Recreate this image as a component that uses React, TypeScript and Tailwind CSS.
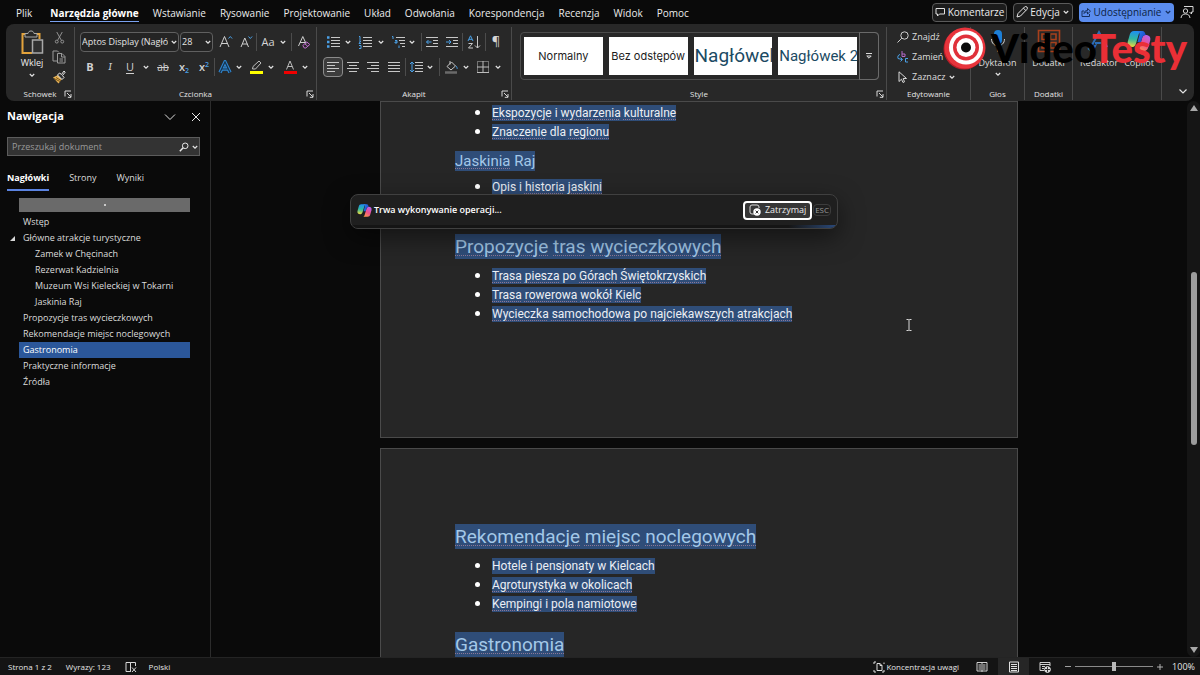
import { useState } from 'react';
import type { ReactNode } from 'react';

const TABS = [
  'Plik', 'Narzędzia główne', 'Wstawianie', 'Rysowanie', 'Projektowanie', 'Układ',
  'Odwołania', 'Korespondencja', 'Recenzja', 'Widok', 'Pomoc',
];

const HEADINGS = [
  { text: 'Wstęp', level: 1 },
  { text: 'Główne atrakcje turystyczne', level: 1, open: true },
  { text: 'Zamek w Chęcinach', level: 2 },
  { text: 'Rezerwat Kadzielnia', level: 2 },
  { text: 'Muzeum Wsi Kieleckiej w Tokarni', level: 2 },
  { text: 'Jaskinia Raj', level: 2 },
  { text: 'Propozycje tras wycieczkowych', level: 1 },
  { text: 'Rekomendacje miejsc noclegowych', level: 1 },
  { text: 'Gastronomia', level: 1 },
  { text: 'Praktyczne informacje', level: 1 },
  { text: 'Źródła', level: 1 },
];

function Chevron({ className = 'w-2 shrink-0' }: { className?: string }) {
  return (
    <svg viewBox="0 0 8 8" className={className} fill="none" stroke="#e4e4e4" strokeWidth="1.2">
      <path d="M1.8 3 4 5.2 6.2 3" />
    </svg>
  );
}

function Sep() {
  return <span className="h-[18px] w-px shrink-0 bg-[#4c4c4c]" />;
}

function Tool({ label, className, children }: { label: string; className: string; children: ReactNode }) {
  return (
    <button type="button" aria-label={label} className={`flex h-5 shrink-0 items-center justify-center ${className}`}>
      {children}
    </button>
  );
}

function Group({ name, launcher, className, children }: { name: string; launcher?: boolean; className: string; children: ReactNode }) {
  return (
    <section className={`relative mt-[3px] mb-px flex flex-col border-r border-[#4a4a4a] ${className}`}>
      <div className="min-h-0 flex-1">{children}</div>
      <div className="h-3 text-center text-[8px] leading-3 text-[#e4e4e4]">{name}</div>
      {launcher && (
        <button type="button" aria-label={`${name} - więcej opcji`} className="absolute right-[2px] bottom-[2px]">
          <svg viewBox="0 0 8 8" className="h-2 w-2" fill="none" stroke="#d8d8d8">
            <path d="M1 6.5V1H7M3 3l4 4M7 4v3.3H3.8" />
          </svg>
        </button>
      )}
    </section>
  );
}

/* Lines of a paragraph icon, one [x1, x2] pair per row */
function Lines({ rows, children }: { rows: number[][]; children?: ReactNode }) {
  return (
    <svg viewBox="0 0 14 14" className="h-[14px] w-[14px]" fill="none" stroke="#c8c8c8">
      {rows.map(([a, b], i) => (
        <path key={i} d={`M${a} ${2.5 + i * 3}H${b}`} />
      ))}
      {children}
    </svg>
  );
}

function CopilotLogo({ id, className }: { id: string; className: string }) {
  return (
    <svg viewBox="0 0 24 24" className={className}>
      <defs>
        <linearGradient id={`${id}a`} x1="0.4" y1="0" x2="0.3" y2="1">
          <stop offset="0" stopColor="#1e8ff2" />
          <stop offset="0.5" stopColor="#30b8a0" />
          <stop offset="1" stopColor="#f2dc3c" />
        </linearGradient>
        <linearGradient id={`${id}b`} x1="0.8" y1="0" x2="0.2" y2="1">
          <stop offset="0" stopColor="#b565f0" />
          <stop offset="0.5" stopColor="#ee4f8e" />
          <stop offset="1" stopColor="#ff9a45" />
        </linearGradient>
        <linearGradient id={`${id}c`} x1="0" y1="0" x2="1" y2="0.6">
          <stop offset="0" stopColor="#2f8df5" />
          <stop offset="1" stopColor="#1a45c8" />
        </linearGradient>
      </defs>
      <path d="M7 2h8c-2 0-2.700 1.200-3.200 3L9 14.500C8.400 16.500 7.400 18 5.500 18 1.500 18 0 15.500 0.800 12.600L2.800 5.500C3.500 3.200 4.600 2 7 2Z" fill={`url(#${id}a)`} />
      <path d="M17 22H9c2 0 2.700-1.200 3.200-3L15 9.500C15.600 7.500 16.600 6 18.500 6 22.500 6 24 8.500 23.200 11.400L21.200 18.500C20.500 20.800 19.400 22 17 22Z" fill={`url(#${id}b)`} />
      <path d="M9 2h6.500c1.500 0 2.200 1 2.700 2.400L18.800 6c-2.200 0-3.200 1.500-3.800 3.500L14 13h-3.500l2-7C12.900 4 11.500 2 9 2Z" fill={`url(#${id}c)`} />
    </svg>
  );
}

function TitleBar() {
  return (
    <header className="flex h-6 shrink-0 items-center justify-between pr-[6px] pl-4">
      <nav className="flex gap-[14px] text-[10px] leading-[16px] text-[#ececec]">
        {TABS.map((tab) => (
          <a
            key={tab}
            href="#"
            className={`border-b pt-[2px] whitespace-nowrap ${
              tab === 'Narzędzia główne' ? 'ml-1 border-[#7aa2f0] font-bold text-white' : 'border-transparent'
            }`}
          >
            {tab}
          </a>
        ))}
      </nav>
      <div className="flex items-center gap-[6px] text-[10px] whitespace-nowrap">
        <button type="button" className="flex h-[19px] w-[75px] items-center justify-center gap-[3px] rounded border border-[#5a5a5a] bg-[#1c1c1c] text-[#ececec]">
          <svg viewBox="0 0 10 10" className="h-[10px] w-[10px] shrink-0" fill="none" stroke="#e0e0e0">
            <path d="M1 1.500h8.500v5.500H4.500L2.500 9V7H1Z" />
          </svg>
          Komentarze
        </button>
        <button type="button" className="flex h-[19px] w-[60px] items-center justify-center gap-[2px] rounded border border-[#5a5a5a] bg-[#1c1c1c] text-[#ececec]">
          <svg viewBox="0 0 12 12" className="h-3 w-3 shrink-0" fill="none" stroke="#e8e8e8">
            <path d="M1 11 2 7.500 8.500 1a1.500 1.500 0 0 1 2.400 2.400L4.500 10ZM7.500 2.200l2.300 2.300" />
          </svg>
          Edycja
          <Chevron />
        </button>
        <button type="button" className="flex h-[19px] w-[95px] items-center justify-center gap-[3px] rounded bg-[#5b8def] text-[#0d1f42]">
          <svg viewBox="0 0 10 10" className="h-[10px] w-[10px] shrink-0" fill="none" stroke="#16305f">
            <path d="M3 4H1v5.500h7.500V7M3 6.500c.3-2.200 1.500-3 3.500-3V1.500l3 2.700-3 2.800V5C5 5 4 5.300 3 6.500Z" />
          </svg>
          Udostępnianie
          <svg viewBox="0 0 8 8" className="w-2 shrink-0" fill="none" stroke="#16305f" strokeWidth="1.2">
            <path d="M1.800 3 4 5.200 6.200 3" />
          </svg>
        </button>
        <button type="button" aria-label="Opinia">
          <svg viewBox="0 0 14 14" className="h-[14px] w-[14px]" fill="none" stroke="#d8d8d8">
            <path d="M4 1.500h9v5.500h-1.500V9L9.500 7" />
            <circle cx="5.500" cy="6" r="2.200" />
            <path d="M1 13c.4-3 2-4 4.500-4s4 1 4.500 4" />
          </svg>
        </button>
      </div>
    </header>
  );
}

function ClipboardGroup() {
  return (
    <Group name="Schowek" launcher className="w-[69px]">
      <div className="flex h-full pl-3">
        <button type="button" className="flex w-[28px] flex-col items-center pt-[3px] text-[9px] leading-3 text-[#ececec]">
          <svg viewBox="0 0 24 26" className="h-[26px] w-6" fill="none">
            <path d="M5 4H2.500v19H12M17 4h2.500v5" stroke="#e3a33c" strokeWidth="2" />
            <path d="M5 3.500h3C8.500 1.500 9.500 1 11 1s2.500.5 3 2.500h3V7H5Z" stroke="#a8a8a8" />
            <path d="M12.500 10h10v13h-10Z" fill="#303030" stroke="#a8a8a8" strokeWidth="1.500" />
          </svg>
          <span className="mt-px">Wklej</span>
          <Chevron className="mt-[2px] w-2" />
        </button>
        <div className="flex flex-1 flex-col items-center pr-[2px]">
          <Tool label="Wytnij" className="w-4">
            <svg viewBox="0 0 12 14" className="h-[13px] w-[11px]" fill="none" stroke="#9a9a9a">
              <path d="M3 1l5 9M9 1l-5 9" />
              <circle cx="3" cy="11.500" r="1.600" />
              <circle cx="9" cy="11.500" r="1.600" />
            </svg>
          </Tool>
          <Tool label="Kopiuj" className="w-4">
            <svg viewBox="0 0 14 14" className="h-[14px] w-[14px]" fill="none" stroke="#9a9a9a">
              <path d="M5 11H1V1h4.500L7 2.500M5.500 3.500H10L13 6.500V13H5.500ZM9.500 3.500V7H13M7.500 9h3.500M7.500 11h3.500" />
            </svg>
          </Tool>
          <Tool label="Malarz formatów" className="w-4">
            <svg viewBox="0 0 14 14" className="h-[14px] w-[14px]">
              <path d="M1 7.500 6 5l4 4-3.500 4.500Z" fill="#e8b458" />
              <path d="M2 8.500l6 3M4 7.500l5 3" stroke="#7a5415" />
              <path d="m5.500 5 2-2 2 1.500L12 1l1.200 1.200L10.500 5.500 12 7.500l-2 2Z" fill="#303030" stroke="#e6e6e6" />
            </svg>
          </Tool>
        </div>
      </div>
    </Group>
  );
}

function FontGroup() {
  return (
    <Group name="Czcionka" launcher className="w-[242px]">
      <div className="flex h-[30px] items-center pl-[5px] text-[#d6d6d6]">
        <div className="relative">
          <select aria-label="Czcionka" className="block h-5 w-[99px] appearance-none rounded border border-[#606060] bg-[#242424] pr-[10px] pl-px text-[9px] text-[#e4e4e4]">
            <option>Aptos Display (Nagłówki)</option>
          </select>
          <Chevron className="pointer-events-none absolute top-[6px] right-[1px] w-2" />
        </div>
        <div className="relative ml-px">
          <select aria-label="Rozmiar czcionki" className="block h-5 w-[33px] appearance-none rounded border border-[#606060] bg-[#242424] pl-px text-[9px] text-[#e4e4e4]">
            <option>28</option>
          </select>
          <Chevron className="pointer-events-none absolute top-[6px] right-[1px] w-2" />
        </div>
        <Tool label="Zwiększ rozmiar" className="ml-[3px] w-5">
          <svg viewBox="0 0 14 14" className="h-[14px] w-[14px]" fill="none" stroke="#d0d0d0">
            <path d="M1 12 5.500 1.500 10 12M2.800 8.500h5.500" />
            <path d="m9.500 3.500 1.800-2 1.800 2" stroke="#4aa0e6" />
          </svg>
        </Tool>
        <Tool label="Zmniejsz rozmiar" className="w-5">
          <svg viewBox="0 0 14 14" className="h-[14px] w-[14px]" fill="none" stroke="#d0d0d0">
            <path d="M2 12 5.800 3 9.500 12M3.300 9h5" />
            <path d="m9.500 1.500 1.800 2 1.800-2" stroke="#4aa0e6" />
          </svg>
        </Tool>
        <Sep />
        <Tool label="Zmień wielkość liter" className="w-[34px] gap-1 text-[11px]">
          Aa
          <Chevron />
        </Tool>
        <Sep />
        <Tool label="Wyczyść formatowanie" className="w-6">
          <svg viewBox="0 0 14 14" className="h-[14px] w-[14px]" fill="none" stroke="#d0d0d0">
            <path d="M1.500 11 5.800 1.500 9 8.500M3 7.500h5" />
            <path d="m5.800 10.500 4-3.500 3 2.500-4 3.500h-1.500ZM7.800 8.800l3 2.500" stroke="#c06ad0" />
          </svg>
        </Tool>
      </div>
      <div className="flex h-5 items-center pl-[5px] text-[11px] text-[#d0d0d0]">
        <Tool label="Pogrubienie" className="w-5 font-bold">B</Tool>
        <Tool label="Kursywa" className="w-5 font-serif italic">I</Tool>
        <Tool label="Podkreślenie" className="w-5 underline underline-offset-2">U</Tool>
        <Chevron className="mx-[2px] w-2 shrink-0" />
        <Tool label="Przekreślenie" className="w-[22px] text-[10px] line-through">ab</Tool>
        <Tool label="Indeks dolny" className="w-5 font-semibold">
          <span>x<sub className="text-[7px] text-[#4aa0e6]">2</sub></span>
        </Tool>
        <Tool label="Indeks górny" className="w-5 font-semibold">
          <span>x<sup className="text-[7px] text-[#4aa0e6]">2</sup></span>
        </Tool>
        <Sep />
        <Tool label="Efekty tekstowe" className="w-5">
          <svg viewBox="0 0 14 14" className="h-[14px] w-[14px]" fill="none">
            <path d="M2 12.500 7 2l5 10.500M4 9h6" stroke="#2f86d0" strokeWidth="3.400" />
            <path d="M2 12.500 7 2l5 10.500M4 9h6" stroke="#16324c" strokeWidth="1.200" />
          </svg>
        </Tool>
        <Chevron />
        <Tool label="Kolor wyróżnienia" className="ml-[2px] w-[22px]">
          <svg viewBox="0 0 14 14" className="h-[14px] w-[14px]" fill="none" stroke="#bdbdbd">
            <path d="m4 6.500 6-5.500 2 2-5.500 6H3.500Z" />
            <path d="M1 12.500h13" stroke="#ffff00" strokeWidth="3" />
          </svg>
        </Tool>
        <Chevron />
        <Tool label="Kolor czcionki" className="ml-[4px] w-[22px]">
          <svg viewBox="0 0 14 14" className="h-[14px] w-[14px]" fill="none" stroke="#bdbdbd">
            <path d="M3.500 9.500 7 1l3.500 8.500M4.800 6.500h4.400" />
            <path d="M1 12.500h13" stroke="#f00000" strokeWidth="3" />
          </svg>
        </Tool>
        <Chevron />
      </div>
    </Group>
  );
}

function ParagraphGroup() {
  return (
    <Group name="Akapit" launcher className="w-[195px]">
      <div className="flex h-[30px] items-center pl-[6px] text-[#d6d6d6]">
        <Tool label="Punktory" className="w-5">
          <Lines rows={[[5, 14], [5, 14], [5, 14], [5, 14]]}>
            <path d="M1 2.500h2.500M1 7h2.500M1 11.500h2.500" stroke="#4aa0e6" strokeWidth="2.400" />
          </Lines>
        </Tool>
        <Chevron className="mr-[5px] ml-[1px] w-2 shrink-0" />
        <Tool label="Numerowanie" className="w-4">
          <Lines rows={[[5, 14], [5, 14], [5, 14], [5, 14]]}>
            <path d="M1 1.500h1V5M1 6h1.800L1 8.500h2M1 10.500h2v3H1" stroke="#4aa0e6" />
          </Lines>
        </Tool>
        <Chevron className="mr-[5px] ml-1 w-2 shrink-0" />
        <Tool label="Lista wielopoziomowa" className="w-4">
          <Lines rows={[[5, 14], [8, 14], [9, 14], [11, 14]]}>
            <path d="M1 1.500h1V4M4 5.500h2V8H4V7h2M8 10.500V13" stroke="#4aa0e6" />
          </Lines>
        </Tool>
        <Chevron className="mr-[5px] ml-[2px] w-2 shrink-0" />
        <Sep />
        <Tool label="Zmniejsz wcięcie" className="w-5">
          <Lines rows={[[1, 13], [8, 13], [8, 13], [1, 13]]}>
            <path d="M6.500 7H1.500M3.500 5l-2 2 2 2" stroke="#4aa0e6" />
          </Lines>
        </Tool>
        <Tool label="Zwiększ wcięcie" className="w-5">
          <Lines rows={[[1, 13], [8, 13], [8, 13], [1, 13]]}>
            <path d="M1 7h5M4 5l2 2-2 2" stroke="#4aa0e6" />
          </Lines>
        </Tool>
        <Sep />
        <Tool label="Sortuj" className="w-[22px]">
          <svg viewBox="0 0 14 14" className="h-[14px] w-[14px]" fill="none" stroke="#c8c8c8">
            <path d="M1 6 3.500.8 6 6M2 4.300h3" stroke="#4aa0e6" />
            <path d="M1.500 8.500h4L1.500 13h4.500M10.500 1v12M8 10.500l2.500 2.500 2.500-2.500" />
          </svg>
        </Tool>
        <Sep />
        <Tool label="Pokaż wszystko" className="w-5 text-[13px]">¶</Tool>
      </div>
      <div className="flex h-5 items-center pl-[6px]">
        <Tool label="Wyrównaj do lewej" className="w-5 rounded border border-[#8a8a8a] bg-[#3c3c3c]">
          <Lines rows={[[1, 13], [1, 9], [1, 13], [1, 9]]} />
        </Tool>
        <Tool label="Wyśrodkuj" className="w-5">
          <Lines rows={[[1, 13], [3, 11], [1, 13], [3, 11]]} />
        </Tool>
        <Tool label="Wyrównaj do prawej" className="w-5">
          <Lines rows={[[1, 13], [5, 13], [1, 13], [5, 13]]} />
        </Tool>
        <Tool label="Wyjustuj" className="w-[22px]">
          <Lines rows={[[1, 13], [1, 13], [1, 13], [1, 13]]} />
        </Tool>
        <Sep />
        <Tool label="Interlinia" className="w-5">
          <Lines rows={[[6, 14], [6, 14], [6, 14], [6, 14]]}>
            <path d="M3 2v10M1 4l2-2 2 2M1 10l2 2 2-2" stroke="#4aa0e6" />
          </Lines>
        </Tool>
        <Chevron className="mr-[5px] w-2 shrink-0" />
        <Sep />
        <Tool label="Cieniowanie" className="w-[22px]">
          <svg viewBox="0 0 14 14" className="h-[14px] w-[14px]" fill="none" stroke="#c8c8c8">
            <path d="M3 6.500 7.500 2l4 4-4.500 4ZM6 1v3.500" />
            <path d="M12 6c1 1.500 1.500 2 1 3" stroke="#4aa0e6" />
            <path d="M1 12.500h12" stroke="#6a6a6a" strokeWidth="2.500" />
          </svg>
        </Tool>
        <Chevron className="mr-[2px] w-2 shrink-0" />
        <Tool label="Obramowania" className="w-[22px]">
          <svg viewBox="0 0 14 14" className="h-[14px] w-[14px]" fill="none" stroke="#bdbdbd">
            <path d="M1.500 1.500h11v11h-11Z" strokeDasharray="1 1" />
            <path d="M7 1v12M1 7h12M1 12.500h12" />
          </svg>
        </Tool>
        <Chevron />
      </div>
    </Group>
  );
}

function StylesGroup() {
  return (
    <Group name="Style" launcher className="min-w-0 flex-1">
      <div className="mt-[5px] mr-[7px] ml-2 flex h-12 rounded border border-[#4c4c4c]">
        <div className="grid flex-1 grid-cols-4 gap-[6px] py-1 pr-[2px] pl-[3px] font-['Inter',sans-serif] whitespace-nowrap">
          <button type="button" className="overflow-hidden bg-white text-[11px] text-[#1c1c1c]">Normalny</button>
          <button type="button" className="overflow-hidden bg-white text-[11px] text-[#1c1c1c]">Bez odstępów</button>
          <button type="button" className="overflow-hidden bg-white pl-px text-left font-['Roboto',sans-serif] text-[19px] text-[#1b4a63]">Nagłówek 1</button>
          <button type="button" className="overflow-hidden bg-white pl-px text-left font-['Roboto',sans-serif] text-[15px] text-[#1b4a63]">Nagłówek 2</button>
        </div>
        <button type="button" aria-label="Więcej stylów" className="-my-px -mr-px flex w-5 items-center justify-center rounded-r border border-[#6a6a6a]">
          <svg viewBox="0 0 8 8" className="h-2 w-2" fill="none" stroke="#dadada">
            <path d="M1 1.500h6M1.800 4 4 6.200 6.200 4Z" />
          </svg>
        </button>
      </div>
    </Group>
  );
}

function EditingGroups() {
  return (
    <>
      <Group name="Edytowanie" className="w-[84px]">
        <div className="flex flex-col pl-[10px] text-[9px] text-[#dedede]">
          <button type="button" className="flex h-5 items-center gap-[3px]">
            <svg viewBox="0 0 12 12" className="h-3 w-3" fill="none" stroke="#d0d0d0">
              <circle cx="7.500" cy="4.500" r="3.700" />
              <path d="M4.800 7.200.5 11.500" />
            </svg>
            Znajdź
          </button>
          <button type="button" className="flex h-5 items-center gap-[3px]">
            <svg viewBox="0 0 12 12" className="h-3 w-3" fill="none">
              <path d="M5 0v5.500h3V3H5" stroke="#b56ac8" />
              <path d="M3 3.500C1 4 .5 5.500 1 7.500L5 8.500M3.500 6.500l2 2-2 2M11 7.500H8.500v3.500H11" stroke="#4aa0e6" />
            </svg>
            Zamień
          </button>
          <button type="button" className="flex h-5 items-center gap-[3px]">
            <svg viewBox="0 0 12 12" className="h-3 w-3" fill="none" stroke="#d8d8d8">
              <path d="M2 .8v9.700l2.500-2.300L6 11.500l1.500-.7L6.200 7.500H9.500Z" />
            </svg>
            Zaznacz
            <Chevron />
          </button>
        </div>
      </Group>
      <Group name="Głos" className="w-[54px]">
        <button type="button" className="flex w-full flex-col items-center pt-[2px] text-[9px] leading-[14px] text-[#dedede]">
          <svg viewBox="0 0 16 24" className="h-6 w-4" fill="none">
            <rect x="4" y="1" width="8" height="14" rx="4" fill="#1d7fd6" />
            <path d="M1.500 10c0 9 13 9 13 0M8 17v6" stroke="#d0d0d0" />
          </svg>
          <span className="mt-[3px]">Dyktafon</span>
          <Chevron />
        </button>
      </Group>
      <Group name="Dodatki" className="w-12">
        <button type="button" className="flex w-full flex-col items-center pt-[2px] text-[9px] leading-[14px] text-[#dedede]">
          <svg viewBox="0 0 24 24" className="h-6 w-6" fill="none" stroke="#a8401c" strokeWidth="1.600">
            <path d="M1.500 1.500h21v21h-21ZM5 5h5.500v5.500H5ZM13.500 5H19v5.500h-5.500ZM5 13.500h5.500V19H5ZM13.500 13.500H19V19h-5.500Z" />
          </svg>
          <span className="mt-[3px]">Dodatki</span>
        </button>
      </Group>
      <Group name="" className="w-[89px]">
        <div className="flex justify-center gap-[6px] pt-[2px] text-[9px] leading-[14px] text-[#dedede]">
          <button type="button" className="flex flex-col items-center">
            <svg viewBox="0 0 24 24" className="h-6 w-6" fill="none" stroke="#2b6cb8" strokeWidth="2">
              <path d="M4 18 12 3l8 15M8 14h9M2 20l6-3-3 6Z" />
            </svg>
            <span className="mt-[3px]">Redaktor</span>
          </button>
          <button type="button" className="flex flex-col items-center">
            <CopilotLogo id="ribbon" className="h-6 w-6" />
            <span className="mt-[3px]">Copilot</span>
          </button>
        </div>
      </Group>
    </>
  );
}

function ChannelLogo() {
  return (
    <div className="pointer-events-none absolute top-[26px] right-[13px] z-20 flex w-[244px] items-center justify-between font-['Lato',sans-serif] text-[40px] leading-[44px] font-black">
      <svg viewBox="0 0 44 44" className="h-11 w-11">
        <circle cx="21" cy="23" r="20.500" fill="#b81d28" />
        <circle cx="22" cy="22" r="20.500" fill="#e8343c" />
        <circle cx="23" cy="21.500" r="17" fill="#fff" />
        <circle cx="23" cy="21.500" r="13" fill="#e0303a" />
        <circle cx="23" cy="21.500" r="9.500" fill="#fff" />
        <circle cx="23" cy="21.500" r="5" fill="#0a0a0a" />
      </svg>
      <span>
        <span className="text-black">Video</span>
        <span className="text-[#ea2f36]">Testy</span>
      </span>
    </div>
  );
}

function NavigationPane() {
  const [query, setQuery] = useState('');

  return (
    <aside className="flex w-[211px] shrink-0 flex-col border-r border-[#2c2c2c] text-[#dcdcdc]">
      <div className="flex h-[31px] items-center pr-[9px] pl-[7px]">
        <h2 className="flex-1 text-[11px] font-bold text-white">Nawigacja</h2>
        <button type="button" aria-label="Opcje okienka">
          <svg viewBox="0 0 12 12" className="h-3 w-3" fill="none" stroke="#e0e0e0">
            <path d="m1 3.500 5 5 5-5" />
          </svg>
        </button>
        <button type="button" aria-label="Zamknij" className="ml-[15px]">
          <svg viewBox="0 0 10 10" className="h-[10px] w-[10px]" fill="none" stroke="#e8e8e8">
            <path d="m1 1 8 8M9 1 1 9" />
          </svg>
        </button>
      </div>
      <div className="mt-[5px] mr-[10px] ml-[7px] flex h-[19px] items-center border border-[#5c5c5c] bg-[#333] pr-0 pl-1">
        <input
          value={query}
          onChange={(e) => setQuery(e.target.value)}
          aria-label="Przeszukaj dokument"
          placeholder="Przeszukaj dokument"
          className="min-w-0 flex-1 text-[9px] placeholder:text-[#9a9a9a]"
        />
        <svg viewBox="0 0 10 10" className="h-[10px] w-[10px]" fill="none" stroke="#e8e8e8">
          <circle cx="6.200" cy="3.800" r="2.800" />
          <path d="M4.200 5.800.8 9.200" strokeWidth="1.500" />
        </svg>
        <Chevron className="ml-[2px] w-2" />
      </div>
      <div role="tablist" className="mt-[13px] ml-[7px] flex gap-5 text-[9px] leading-[18px]">
        <button type="button" role="tab" aria-selected="true" className="border-b-2 border-[#5b83e0] pb-[2px] font-bold text-white">Nagłówki</button>
        <button type="button" role="tab" aria-selected="false" className="border-b-2 border-transparent pb-[2px]">Strony</button>
        <button type="button" role="tab" aria-selected="false" className="border-b-2 border-transparent pb-[2px]">Wyniki</button>
      </div>
      <div className="mt-[7px] mr-5 ml-[19px] flex h-[14px] items-center justify-center bg-[#6a6a6a]">
        <span className="h-[2px] w-[2px] bg-[#c8c8c8]" />
      </div>
      <ul className="mt-[2px] text-[9px] leading-4 whitespace-nowrap">
        {HEADINGS.map((h) => (
          <li key={h.text} className="mr-5 ml-[10px] flex items-center">
            <span className="w-[9px] shrink-0">
              {h.open && (
                <svg viewBox="0 0 5 5" className="h-[5px] w-[5px]" fill="#d8d8d8">
                  <path d="M5 0v5H0Z" />
                </svg>
              )}
            </span>
            <a
              href="#"
              className={`flex-1 ${h.level === 2 ? 'pl-4' : 'pl-1'} ${h.text === 'Gastronomia' ? 'bg-[#2b579a] text-white' : ''}`}
            >
              {h.text}
            </a>
          </li>
        ))}
      </ul>
    </aside>
  );
}

function Heading1({ children }: { children: ReactNode }) {
  return (
    <h1 className="flex text-[19px] leading-[25px] text-[#a3c8e8]">
      <span className="bg-[#2f4d78]">{children}</span>
    </h1>
  );
}

function Bullet({ children }: { children: ReactNode }) {
  return (
    <li className="flex h-[19px] items-center pl-5 text-[12px] leading-4 text-[#eceff4]">
      <span className="mr-3 h-[5px] w-[5px] rounded-full bg-white" />
      <span className="bg-[#2f4d78]">{children}</span>
    </li>
  );
}

/* Proofing mark under a misspelled word */
function Err({ children }: { children: ReactNode }) {
  return (
    <span className="underline decoration-[#8d7796] decoration-dotted decoration-1 underline-offset-2">{children}</span>
  );
}

function CopilotBar() {
  return (
    <div className="absolute top-[92px] -left-[31px] z-10 flex h-[35px] w-[488px] flex-col overflow-hidden rounded-lg border border-[#404040] bg-[#1f1f1f] font-['Open_Sans',sans-serif] shadow-[0_8px_24px_rgba(0,0,0,0.5)]">
      <div className="flex flex-1 items-center pr-[6px] pl-[6px]">
        <CopilotLogo id="bar" className="h-[15px] w-[15px]" />
        <span className="ml-[2px] flex-1 text-[9px] font-semibold text-white">Trwa wykonywanie operacji...</span>
        <button type="button" className="flex h-[19px] w-[69px] items-center justify-center gap-1 rounded border-2 border-white bg-[#363636] text-[9px] text-[#ececec]">
          <svg viewBox="0 0 12 12" className="h-3 w-3" fill="none">
            <path d="M5 10H3a2 2 0 0 1-2-2V3a2 2 0 0 1 2-2h5a2 2 0 0 1 2 2v1" stroke="#d8d8d8" />
            <circle cx="8" cy="8" r="3.700" fill="#fff" />
            <path d="m6.600 6.600 2.800 2.800M9.400 6.600 6.600 9.400" stroke="#333" />
          </svg>
          Zatrzymaj
        </button>
        <kbd className="ml-px rounded-sm border border-[#3c3c3c] px-px font-['Open_Sans',sans-serif] text-[8px] leading-[10px] text-[#9a9a9a]">ESC</kbd>
      </div>
      <div className="h-[3px] bg-linear-to-r from-[#151515] from-90% to-[#2a4a7c]" />
    </div>
  );
}

function Document() {
  return (
    <main className="relative min-w-0 flex-1 overflow-hidden font-['Roboto',sans-serif]">
      <article className="relative mx-auto h-[337px] w-[638px] border border-[#4a4a4a] bg-[#262626] pt-px pl-[74px]">
        <ul>
          <Bullet><Err>Ekspozycje</Err> i <Err>wydarzenia</Err> <Err>kulturalne</Err></Bullet>
          <Bullet><Err>Znaczenie</Err> dla <Err>regionu</Err></Bullet>
        </ul>
        <h2 className="mt-[10px] flex text-[15px] leading-5 text-[#a3c8e8]">
          <span className="bg-[#2f4d78]"><Err>Jaskinia</Err> Raj</span>
        </h2>
        <ul className="mt-[6px] mb-[38px]">
          <Bullet>Opis i <Err>historia</Err> <Err>jaskini</Err></Bullet>
        </ul>
        <Heading1><Err>Propozycje</Err> <Err>tras</Err> <Err>wycieczkowych</Err></Heading1>
        <ul className="mt-[7px]">
          <Bullet><Err>Trasa</Err> <Err>piesza</Err> po <Err>Górach</Err> <Err>Świętokrzyskich</Err></Bullet>
          <Bullet><Err>Trasa</Err> <Err>rowerowa</Err> <Err>wokół</Err> <Err>Kielc</Err></Bullet>
          <Bullet><Err>Wycieczka</Err> <Err>samochodowa</Err> po <Err>najciekawszych</Err> <Err>atrakcjach</Err></Bullet>
        </ul>
        <CopilotBar />
      </article>
      <article className="mx-auto mt-[10px] w-[638px] border border-[#4a4a4a] bg-[#262626] pt-[75px] pb-20 pl-[74px]">
        <Heading1><Err>Rekomendacje</Err> <Err>miejsc</Err> <Err>noclegowych</Err></Heading1>
        <ul className="mt-[7px] mb-[19px]">
          <Bullet>Hotele i pensjonaty w Kielcach</Bullet>
          <Bullet><Err>Agroturystyka</Err> w <Err>okolicach</Err></Bullet>
          <Bullet><Err>Kempingi</Err> i <Err>pola</Err> <Err>namiotowe</Err></Bullet>
        </ul>
        <Heading1><Err>Gastronomia</Err></Heading1>
      </article>
      {/* Text cursor */}
      <svg viewBox="0 0 8 12" className="absolute top-[218px] left-[694px] h-3 w-2" fill="none" stroke="#d8d8d8">
        <path d="M1.500.5h2l.5.5.5-.5h2M4 1v10M1.500 11.500h2l.5-.5.5.5h2" />
      </svg>
    </main>
  );
}

function Scrollbar() {
  return (
    <div className="flex w-[13px] shrink-0 flex-col items-center rounded-lg bg-[#151515] py-1">
      <svg viewBox="0 0 8 6" className="h-[6px] w-2" fill="#a8a8a8"><path d="M4 0 8 6H0Z" /></svg>
      <div className="flex min-h-0 flex-1 flex-col">
        <div className="flex-[161]" />
        <div className="w-[6px] flex-[174] rounded-full bg-[#9c9c9c]" />
        <div className="flex-[202]" />
      </div>
      <svg viewBox="0 0 8 6" className="h-[6px] w-2" fill="#a8a8a8"><path d="M4 6 0 0h8Z" /></svg>
    </div>
  );
}

function StatusBar() {
  const [zoom, setZoom] = useState(50);

  return (
    <footer className="flex h-[18px] shrink-0 items-center border-t border-[#242424] bg-[#141414] pr-[5px] pl-2 text-[8px] whitespace-nowrap text-[#e4e4e4]">
      <span>Strona 1 z 2</span>
      <span className="ml-[14px]">Wyrazy: 123</span>
      <svg viewBox="0 0 12 12" className="ml-[14px] h-3 w-3" fill="none" stroke="#d8d8d8">
        <path d="M5.500 1.500H1v9h4.500ZM5.500 1.500H10.500V5M5.500 1.500v9M7 6.500l4 4.500M11 6.500 7 11" />
      </svg>
      <span className="ml-3 flex-1">Polski</span>
      <button type="button" className="flex items-center gap-[1px]">
        <svg viewBox="0 0 12 12" className="h-3 w-3" fill="none" stroke="#e0e0e0">
          <path d="M3 1H1v2M1 9v2h2M9 11h2V9M11 3V1.500M4 2.500h3L9 4.500v5H4ZM7 2.500v2h2" />
        </svg>
        Koncentracja uwagi
      </button>
      <button type="button" aria-label="Tryb odczytu" className="ml-[17px]">
        <svg viewBox="0 0 12 12" className="h-3 w-3" fill="none" stroke="#d0d0d0">
          <path d="M1 1.500h10v8.500H1ZM6 1.500V11M2.500 4H5M2.500 6H5M2.500 8H5M7 4h2.500M7 6h2.500M7 8h2.500" />
        </svg>
      </button>
      <button type="button" aria-label="Układ wydruku" className="ml-[10px] flex h-[17px] w-[31px] items-center justify-center bg-[#262626]">
        <svg viewBox="0 0 10 12" className="h-3 w-[10px]" fill="none" stroke="#e0e0e0">
          <path d="M.5 1h9v10h-9ZM2 3.500h6M2 5.500h6M2 7.500h6M2 9.500h6" />
        </svg>
      </button>
      <button type="button" aria-label="Układ sieci Web" className="ml-[10px]">
        <svg viewBox="0 0 12 12" className="h-3 w-3" fill="none" stroke="#d0d0d0">
          <path d="M5 9.500H1v-8h10V5M1 3.500h10M3 5.500h3M3 7.500h2" />
          <circle cx="8.500" cy="8.500" r="2.900" fill="#e0e0e0" />
          <path d="M8.500 6v5M6 8.500h5" stroke="#333" />
        </svg>
      </button>
      <button type="button" aria-label="Pomniejsz" className="ml-[14px] h-px w-[6px] bg-[#a0a0a0]" />
      <input
        type="range"
        aria-label="Powiększenie"
        value={zoom}
        onChange={(e) => setZoom(Number(e.target.value))}
        className="mx-[4px] h-px w-[78px] appearance-none bg-[#8a8a8a] [&::-webkit-slider-thumb]:h-[9px] [&::-webkit-slider-thumb]:w-1 [&::-webkit-slider-thumb]:appearance-none [&::-webkit-slider-thumb]:bg-[#b8b8b8]"
      />
      <button type="button" aria-label="Powiększ">
        <svg viewBox="0 0 6 6" className="h-[6px] w-[6px]" fill="none" stroke="#b0b0b0"><path d="M0 3h6M3 0v6" /></svg>
      </button>
      <span className="ml-[9px] text-[9px]">100%</span>
    </footer>
  );
}

export default function App() {
  return (
    <div className="relative flex h-screen flex-col overflow-hidden bg-[#0a0a0a] font-['Open_Sans',sans-serif]">
      <TitleBar />
      {/* Ribbon */}
      <div className="mx-[6px] flex h-[77px] shrink-0 rounded-lg bg-[#282828]">
        <ClipboardGroup />
        <FontGroup />
        <ParagraphGroup />
        <StylesGroup />
        <EditingGroups />
        <button type="button" aria-label="Zwiń wstążkę" className="flex w-8 items-end justify-center pb-[5px] pl-[9px]">
          <svg viewBox="0 0 10 10" className="h-[10px] w-[10px]" fill="none" stroke="#e4e4e4" strokeWidth="1.200">
            <path d="m1.500 3.500 3.500 3.500 3.500-3.500" />
          </svg>
        </button>
      </div>
      <div className="flex min-h-0 flex-1">
        <NavigationPane />
        <Document />
        <Scrollbar />
      </div>
      <StatusBar />
      <ChannelLogo />
    </div>
  );
}
